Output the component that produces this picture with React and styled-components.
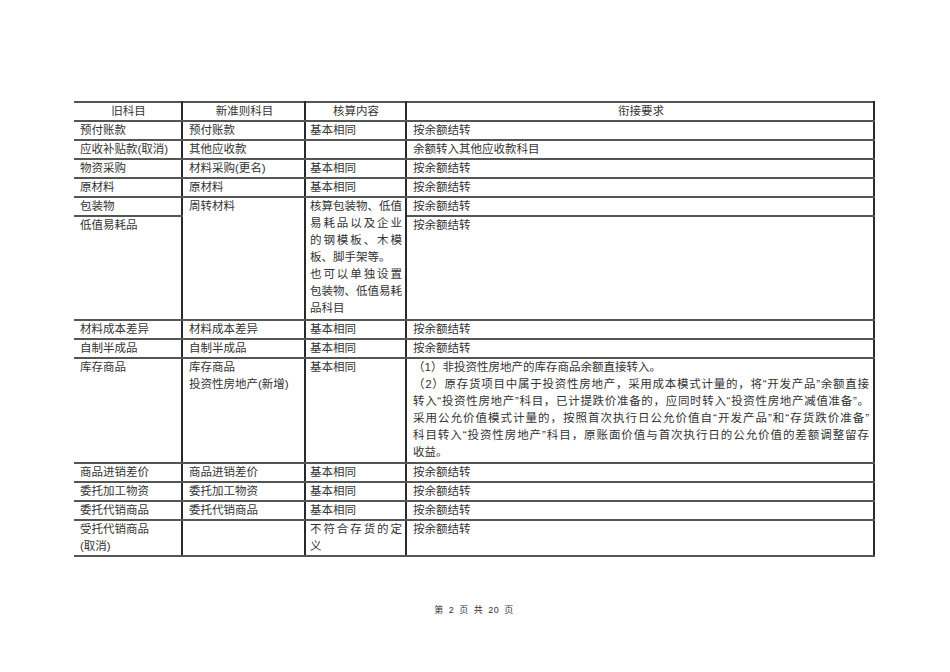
import React from 'react'
import styled, { createGlobalStyle } from 'styled-components'

const GlobalStyle = createGlobalStyle`
  html, body {
    margin: 0;
    padding: 0;
    background: #fff;
  }
  body {
    font-family: "Liberation Sans", "Noto Sans CJK SC", sans-serif;
    color: #333;
  }
`

const Page = styled.div`
  width: 950px;
  height: 672px;
  padding: 101px 0 0 74px;
  box-sizing: border-box;
  background: #fff;
`

const Table = styled.table`
  width: 800px;
  border-collapse: collapse;
  table-layout: fixed;
  font-size: 11.5px;
  line-height: 17px;
`

const Cell = styled.td`
  border-top: 2px solid #555;
  border-bottom: 2px solid #555;
  border-left: ${p => (p.$first ? 'none' : '2px solid #2a2a2a')};
  border-right: 2px solid #2a2a2a;
  padding: ${p => (p.$tight ? '0 3px 0 4px' : '0 4px 0 6px')};
  padding-bottom: ${p => p.$pb || 0}px;
  height: ${p => (p.$h ? p.$h + 'px' : 'auto')};
  vertical-align: top;
  text-align: ${p => (p.$center ? 'center' : 'left')};
  white-space: nowrap;
  overflow: hidden;
  color: #333;
`

const Line = styled.span`
  display: block;
  white-space: nowrap;
  text-align: justify;
  text-align-last: ${p => (p.$fill ? 'justify' : 'left')};
`

const Footer = styled.div`
  width: 800px;
  margin-top: 46px;
  text-align: center;
  font-size: 9px;
  letter-spacing: 0.5px;
  word-spacing: 2px;
  color: #333;
`

const simple = [
  ['预付账款', '预付账款', '基本相同', '按余额结转'],
  ['应收补贴款(取消)', '其他应收款', '', '余额转入其他应收款科目'],
  ['物资采购', '材料采购(更名)', '基本相同', '按余额结转'],
  ['原材料', '原材料', '基本相同', '按余额结转'],
]

const middle = [
  ['材料成本差异', '材料成本差异', '基本相同', '按余额结转'],
  ['自制半成品', '自制半成品', '基本相同', '按余额结转'],
]

const tail = [
  ['商品进销差价', '商品进销差价', '基本相同', '按余额结转'],
  ['委托加工物资', '委托加工物资', '基本相同', '按余额结转'],
  ['委托代销商品', '委托代销商品', '基本相同', '按余额结转'],
]

const packLines = [
  ['核算包装物、低值', true],
  ['易耗品以及企业', true],
  ['的钢模板、木模', true],
  ['板、脚手架等。', false],
  ['也可以单独设置', true],
  ['包装物、低值易耗', true],
  ['品科目', false],
]

const stockLines = [
  ['（1）非投资性房地产的库存商品余额直接转入。', false],
  ['（2）原存货项目中属于投资性房地产，采用成本模式计量的，将“开发产品”余额直接', true],
  ['转入“投资性房地产”科目，已计提跌价准备的，应同时转入“投资性房地产减值准备”。', true],
  ['采用公允价值模式计量的，按照首次执行日公允价值自“开发产品”和“存货跌价准备”', true],
  ['科目转入“投资性房地产”科目，原账面价值与首次执行日的公允价值的差额调整留存', true],
  ['收益。', false],
]

function SimpleRow({ row }) {
  return (
    <tr>
      <Cell $first>{row[0]}</Cell>
      <Cell>{row[1]}</Cell>
      <Cell $tight>{row[2]}</Cell>
      <Cell>{row[3]}</Cell>
    </tr>
  )
}

export default function App() {
  return (
    <Page>
      <GlobalStyle />
      <Table>
        <colgroup>
          <col style={{ width: 108 }} />
          <col style={{ width: 123 }} />
          <col style={{ width: 101 }} />
          <col style={{ width: 468 }} />
        </colgroup>
        <tbody>
          <tr>
            <Cell $first $center>旧科目</Cell>
            <Cell $center>新准则科目</Cell>
            <Cell $center $tight>核算内容</Cell>
            <Cell $center>衔接要求</Cell>
          </tr>
          {simple.map((r, i) => <SimpleRow key={'s' + i} row={r} />)}
          <tr>
            <Cell $first $h={17}>包装物</Cell>
            <Cell rowSpan={2}>周转材料</Cell>
            <Cell rowSpan={2} $tight $pb={1}>
              {packLines.map(([t, f], i) => <Line key={i} $fill={f}>{t}</Line>)}
            </Cell>
            <Cell $h={17}>按余额结转</Cell>
          </tr>
          <tr>
            <Cell $first $h={102}>低值易耗品</Cell>
            <Cell $h={102}>按余额结转</Cell>
          </tr>
          {middle.map((r, i) => <SimpleRow key={'m' + i} row={r} />)}
          <tr>
            <Cell $first>库存商品</Cell>
            <Cell>
              <Line>库存商品</Line>
              <Line>投资性房地产(新增)</Line>
            </Cell>
            <Cell $tight>基本相同</Cell>
            <Cell $pb={1}>
              {stockLines.map(([t, f], i) => <Line key={i} $fill={f}>{t}</Line>)}
            </Cell>
          </tr>
          {tail.map((r, i) => <SimpleRow key={'t' + i} row={r} />)}
          <tr>
            <Cell $first>
              <Line>受托代销商品</Line>
              <Line>(取消)</Line>
            </Cell>
            <Cell></Cell>
            <Cell $tight>
              <Line $fill>不符合存货的定</Line>
              <Line>义</Line>
            </Cell>
            <Cell>按余额结转</Cell>
          </tr>
        </tbody>
      </Table>
      <Footer>第 2 页 共 20 页</Footer>
    </Page>
  )
}
